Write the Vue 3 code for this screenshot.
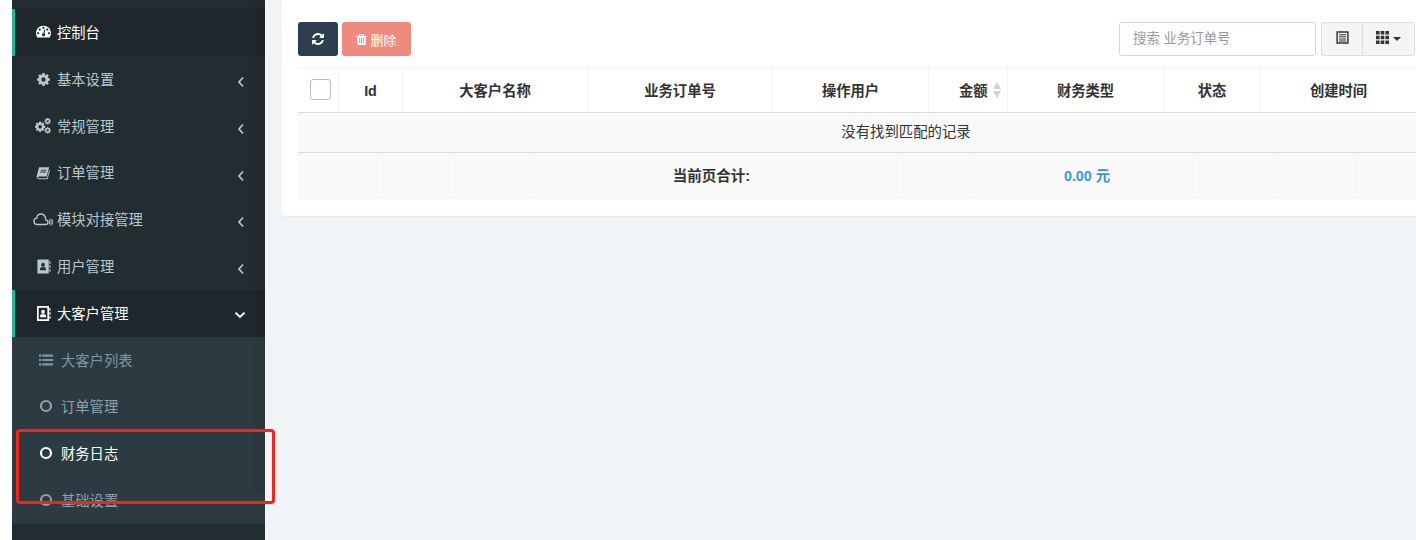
<script setup>
const cog = 'M1152 896q0-106-75-181t-181-75-181 75-75 181 75 181 181 75 181-75 75-181zm512-109v222q0 12-8 23t-20 13l-185 28q-19 54-39 91 35 50 107 138 10 12 10 25t-9 23q-27 37-99 108t-94 71q-12 0-26-9l-138-108q-44 23-91 38-16 136-29 186-7 28-36 28h-222q-14 0-24.5-8.5t-11.5-21.5l-28-184q-49-16-90-37l-141 107q-10 9-25 9-14 0-25-11-126-114-165-168-7-10-7-23 0-12 8-23 15-21 51-66.5t54-70.5q-27-50-41-99l-183-27q-13-2-21-12.5t-8-23.5v-222q0-12 8-23t19-13l186-28q14-46 39-92-40-57-107-138-10-12-10-24 0-10 9-23 26-36 98.5-107.5t94.5-71.5q13 0 26 10l138 107q44-23 91-38 16-136 29-186 7-28 36-28h222q14 0 24.5 8.5t11.5 21.5l28 184q49 16 90 37l142-107q9-9 24-9 13 0 25 10 129 119 165 170 7 8 7 22 0 12-8 23-15 21-51 66.5t-54 70.5q26 50 41 98l183 28q13 2 21 12.5t8 23.5z'
const vbFa = '0 0 1792 1792'
const icons = {
  dash: { vb: vbFa, paths: [{ d: 'M384 1152q0-53-37.5-90.5t-90.5-37.5-90.5 37.5-37.5 90.5 37.5 90.5 90.5 37.5 90.5-37.5 37.5-90.5zm192-448q0-53-37.5-90.5t-90.5-37.5-90.5 37.5-37.5 90.5 37.5 90.5 90.5 37.5 90.5-37.5 37.5-90.5zm428 481l101-382q6-26-7.5-48.5t-38.5-29.5-48 6.5-30 39.5l-101 382q-60 5-107 43.5t-63 98.5q-20 77 20 146t117 89 146-20 89-117q16-60-6-117t-72-91zm660-33q0-53-37.5-90.5t-90.5-37.5-90.5 37.5-37.5 90.5 37.5 90.5 90.5 37.5 90.5-37.5 37.5-90.5zm-640-640q0-53-37.5-90.5t-90.5-37.5-90.5 37.5-37.5 90.5 37.5 90.5 90.5 37.5 90.5-37.5 37.5-90.5zm448 192q0-53-37.5-90.5t-90.5-37.5-90.5 37.5-37.5 90.5 37.5 90.5 90.5 37.5 90.5-37.5 37.5-90.5zm320 448q0 261-141 483-19 29-54 29h-1402q-35 0-54-29-141-221-141-483 0-182 71-348t191-286 286-191 348-71 348 71 286 191 191 286 71 348z', t: 'translate(0 -180)' }] },
  cog: { vb: vbFa, paths: [{ d: cog }] },
  cogs: { vb: vbFa, paths: [
    { d: cog, t: 'translate(-110 300) scale(.76)' },
    { d: cog, t: 'translate(1000 -60) scale(.47)' },
    { d: cog, t: 'translate(1000 960) scale(.47)' }
  ] },
  book: { vb: '0 0 16 16', paths: [
    { d: 'M4.2 1.5h11l-.4 1.2-2.7 9.4H3.4c-.8 0-1.3.4-1.1 1 .2.5.6.8 1.2.8h9l2.6-9.3.9.7-2.8 9.7H3.4C1.9 14.8.8 13.8.7 12.4c0-.6.1-1 .3-1.5l2.2-8.2c.1-.6.5-1.2 1-1.2z' },
    { d: 'M5.6 4.2h6.6l-.2.9H5.4zM5 6.4h6.6l-.2.9H4.8z', fill: '#222d32' }
  ] },
  cloud: { vb: '0 0 20 14', paths: [
    { d: 'M4 12.5h8.6c1.4 0 2.4-1 2.4-2.3s-1-2.3-2.3-2.4C12.5 4.5 10.6 2 8 2 5.8 2 4 3.7 3.9 5.9 2.2 6.2 1 7.6 1 9.3c0 1.8 1.3 3.2 3 3.2z', fill: 'none', stroke: 'currentColor', sw: 1.3 },
    { d: 'M16 7.6h.9v5h-.9zM17.6 6.6h.9v7h-.9z M19 7.6h.8v5H19z' }
  ] },
  addr: { vb: '0 0 16 16', paths: [
    { d: 'M1.5 1.2c0-.4.3-.7.7-.7h11.4v15H2.2c-.4 0-.7-.3-.7-.7zM14.2 2.5h1.3v2.5h-1.3zM14.2 6.7h1.3v2.5h-1.3zM14.2 11h1.3v2.5h-1.3z' },
    { d: 'M7.5 4c1.1 0 1.9.9 1.9 2s-.8 2.2-1.9 2.2S5.6 7.1 5.6 6s.8-2 1.9-2zM4.2 12c0-1.8.8-3.2 2-3.4.4.3.8.5 1.3.5s.9-.2 1.3-.5c1.2.2 2 1.6 2 3.4z', fill: '#222d32' }
  ] },
  addro: { vb: '0 0 16 16', paths: [
    { d: 'M2 1h11v14H2z', fill: 'none', stroke: 'currentColor', sw: 1.8 },
    { d: 'M14.2 2.5h1.3v2.5h-1.3zM14.2 6.7h1.3v2.5h-1.3zM14.2 11h1.3v2.5h-1.3z' },
    { d: 'M7.5 4c1.1 0 1.9.9 1.9 2s-.8 2.2-1.9 2.2S5.6 7.1 5.6 6s.8-2 1.9-2zM4.2 12c0-1.8.8-3.2 2-3.4.4.3.8.5 1.3.5s.9-.2 1.3-.5c1.2.2 2 1.6 2 3.4z' }
  ] },
  list: { vb: '0 0 14 12', paths: [{ d: 'M0 .5h2.4v2.2H0zM3.4.5H14v2.2H3.4zM0 4.9h2.4v2.2H0zM3.4 4.9H14v2.2H3.4zM0 9.3h2.4v2.2H0zM3.4 9.3H14v2.2H3.4z' }] },
  circle: { vb: '0 0 14 14', paths: [{ d: 'M7 7m-5 0a5 5 0 1 0 10 0a5 5 0 1 0-10 0', fill: 'none', stroke: 'currentColor', sw: 2.2 }] },
  refresh: { vb: vbFa, paths: [{ d: 'M1639 1056q0 5-1 7-64 268-268 434.5t-478 166.5q-146 0-282.5-55t-243.5-157l-129 129q-19 19-45 19t-45-19-19-45v-448q0-26 19-45t45-19h448q26 0 45 19t19 45-19 45l-137 137q71 66 161 102t187 36q134 0 250-65t186-179q11-17 53-117 8-23 30-23h192q13 0 22.5 9.5t9.5 22.5zm25-800v448q0 26-19 45t-45 19h-448q-26 0-45-19t-19-45 19-45l138-138q-148-137-349-137-134 0-250 65t-186 179q-11 17-53 117-8 23-30 23h-199q-13 0-22.5-9.5t-9.5-22.5v-7q65-268 270-434.5t480-166.5q146 0 284 55.5t245 156.5l130-129q19-19 45-19t45 19 19 45z' }] },
  trash: { vb: vbFa, paths: [{ d: 'M704 1376v-704q0-14-9-23t-23-9h-64q-14 0-23 9t-9 23v704q0 14 9 23t23 9h64q14 0 23-9t9-23zm256 0v-704q0-14-9-23t-23-9h-64q-14 0-23 9t-9 23v704q0 14 9 23t23 9h64q14 0 23-9t9-23zm256 0v-704q0-14-9-23t-23-9h-64q-14 0-23 9t-9 23v704q0 14 9 23t23 9h64q14 0 23-9t9-23zm-544-992h448l-48-117q-7-9-17-11h-317q-10 2-17 11zm928 32v64q0 14-9 23t-23 9h-96v948q0 83-47 143.5t-113 60.5h-832q-66 0-113-58.5t-47-141.5v-952h-96q-14 0-23-9t-9-23v-64q0-14 9-23t23-9h309l70-167q15-37 54-63t79-26h320q40 0 79 26t54 63l70 167h309q14 0 23 9t9 23z' }] },
  tbl: { vb: '0 0 14 14', paths: [
    { d: 'M1.2 1h11.6v12H1.2z', fill: 'none', stroke: 'currentColor', sw: 1.6 },
    { d: 'M3.2 3.4h7.6v1.1H3.2zM3.2 5.7h7.6v1.1H3.2zM3.2 8h7.6v1.1H3.2zM3.2 10.2h7.6v1.1H3.2z' }
  ] },
  th: { vb: '0 0 13 13', paths: [{ d: 'M0 0h3.6v3.4H0zM4.7 0h3.6v3.4H4.7zM9.4 0H13v3.4H9.4zM0 4.8h3.6v3.4H0zM4.7 4.8h3.6v3.4H4.7zM9.4 4.8H13v3.4H9.4zM0 9.6h3.6V13H0zM4.7 9.6h3.6V13H4.7zM9.4 9.6H13V13H9.4z' }] }
}

const menu = [
  { label: '控制台', icon: 'dash', active: true },
  { label: '基本设置', icon: 'cog', arrow: true },
  { label: '常规管理', icon: 'cogs', arrow: true },
  { label: '订单管理', icon: 'book', arrow: true },
  { label: '模块对接管理', icon: 'cloud', arrow: true },
  { label: '用户管理', icon: 'addr', arrow: true },
  { label: '大客户管理', icon: 'addro', active: true, open: true }
]
const sub = [
  { label: '大客户列表', icon: 'list', dim: true },
  { label: '订单管理', icon: 'circle' },
  { label: '财务日志', icon: 'circle', on: true },
  { label: '基础设置', icon: 'circle' }
]
const heads = [
  { label: 'Id', w: 64, latin: true },
  { label: '大客户名称', w: 185 },
  { label: '业务订单号', w: 185 },
  { label: '操作用户', w: 156 },
  { label: '金额', w: 79, sort: true },
  { label: '财务类型', w: 156 },
  { label: '状态', w: 97 },
  { label: '创建时间', w: 156 },
  { label: '', w: 98 }
]
const foots = [
  { w: 79 }, { w: 79 }, { w: 78 },
  { w: 363, text: '当前页合计:', cls: 'sum' },
  { w: 78 },
  { w: 225, text: '0.00 元', cls: 'money' },
  { w: 78 }, { w: 79 }, { w: 157 }
]
const px = (w) => ({ width: w + 'px' })
</script>

<template>
  <div class="page">
    <aside class="side">
      <div class="side-top"></div>
      <div v-for="m in menu" :key="m.label" class="item" :class="{ active: m.active }">
        <span class="ico">
          <svg :viewBox="icons[m.icon].vb" class="svg" :class="'i-' + m.icon">
            <path v-for="(p, i) in icons[m.icon].paths" :key="i" :d="p.d" :transform="p.t" :fill="p.fill || 'currentColor'" :stroke="p.stroke" :stroke-width="p.sw" />
          </svg>
        </span>
        <span class="lbl">{{ m.label }}</span>
        <svg v-if="m.arrow" class="chev" viewBox="0 0 8 12"><path d="M6 1.5 2 6l4 4.5" fill="none" stroke="currentColor" stroke-width="1.7" /></svg>
        <svg v-if="m.open" class="chev open" viewBox="0 0 12 8"><path d="M1.5 1.8 6 6l4.5-4.2" fill="none" stroke="currentColor" stroke-width="2" /></svg>
      </div>
      <div class="submenu">
        <div v-for="s in sub" :key="s.label" class="subitem" :class="{ on: s.on }">
          <span class="subico">
            <svg :viewBox="icons[s.icon].vb" class="svg" :class="'i-' + s.icon">
              <path v-for="(p, i) in icons[s.icon].paths" :key="i" :d="p.d" :fill="p.fill || 'currentColor'" :stroke="p.stroke" :stroke-width="p.sw" />
            </svg>
          </span>
          <span class="lbl" :class="{ dimlbl: s.dim }">{{ s.label }}</span>
        </div>
      </div>
      <div class="scroll"></div>
    </aside>

    <main class="main">
      <section class="panel">
        <div class="toolbar">
          <div class="left">
            <button class="btn dark">
              <svg :viewBox="icons.refresh.vb" class="b-ico"><path :d="icons.refresh.paths[0].d" fill="currentColor" /></svg>
            </button>
            <button class="btn del">
              <svg :viewBox="icons.trash.vb" class="t-ico"><path :d="icons.trash.paths[0].d" fill="currentColor" /></svg>
              删除
            </button>
          </div>
          <div class="right">
            <div class="search">搜索 业务订单号</div>
            <div class="group">
              <button class="g-btn first">
                <svg :viewBox="icons.tbl.vb" class="g-ico">
                  <path v-for="(p, i) in icons.tbl.paths" :key="i" :d="p.d" :fill="p.fill || 'currentColor'" :stroke="p.stroke" :stroke-width="p.sw" />
                </svg>
              </button>
              <button class="g-btn second">
                <svg :viewBox="icons.th.vb" class="g-ico"><path :d="icons.th.paths[0].d" fill="currentColor" /></svg>
                <span class="caret"></span>
              </button>
            </div>
          </div>
        </div>

        <div class="table">
          <div class="thead">
            <div class="th chk"><span class="box"></span></div>
            <div v-for="h in heads" :key="h.label" class="th" :class="{ sortable: h.sort }" :style="px(h.w)">
              <span class="thl" :class="{ latin: h.latin }">{{ h.label }}</span>
              <span v-if="h.sort" class="sort"><i class="up"></i><i class="down"></i></span>
            </div>
          </div>
          <div class="empty">没有找到匹配的记录</div>
          <div class="tfoot">
            <div v-for="(f, i) in foots" :key="i" class="tf" :class="f.cls" :style="px(f.w)">{{ f.text }}</div>
          </div>
        </div>
      </section>
    </main>

    <div class="mark"></div>
  </div>
</template>

<style scoped>
.page {
  position: relative;
  display: flex;
  width: 1416px;
  height: 540px;
  overflow: hidden;
  background: #fff;
  font-family: "Liberation Sans", "Noto Sans CJK SC", sans-serif;
  font-size: 14.3px;
  padding-left: 12px;
  box-sizing: border-box;
}
.side {
  position: relative;
  width: 253px;
  flex: none;
  background: #222d32;
  color: #b8c7ce;
}
.side-top { height: 9.2px; }
.lbl { position: relative; top: -1px; }
.item {
  display: flex;
  align-items: center;
  height: 46.8px;
  padding-left: 18px;
  border-left: 3px solid transparent;
  box-sizing: border-box;
  position: relative;
}
.item.active {
  background: #1e282c;
  border-left-color: #18bc9c;
  color: #fff;
}
.ico {
  width: 20px;
  height: 16px;
  margin-right: 4px;
  display: flex;
  align-items: center;
  justify-content: center;
  flex: none;
}
.svg { width: 15px; height: 15px; display: block; flex: none; }
.i-cogs { width: 16px; height: 16px; }
.i-cloud { width: 20px; height: 14px; margin-top: -2px; }
.i-book { width: 14px; height: 14px; }
.chev {
  position: absolute;
  left: 222px;
  top: 20px;
  width: 8px;
  height: 12px;
}
.chev.open { left: 219px; top: 21px; width: 12px; height: 8px; }
.submenu { background: #2c3b41; color: #8aa4af; }
.subitem {
  display: flex;
  align-items: center;
  height: 46.8px;
  padding-left: 26px;
}
.subitem.on { color: #fff; }
.dimlbl { color: #7d98a3; }
.subico {
  width: 15px;
  height: 14px;
  margin-top: -1px;
  margin-right: 8px;
  display: flex;
  align-items: center;
  justify-content: center;
  flex: none;
}
.i-circle { width: 14px; height: 14px; }
.i-list { width: 14px; height: 12px; color: #7d98a3; }
.scroll {
  position: absolute;
  right: 0;
  top: 0;
  width: 10px;
  height: 494px;
  border-radius: 0 0 0 5px;
  background: rgba(0, 0, 0, 0.06);
}
.main {
  flex: 1;
  background: #f1f4f6;
  padding-left: 17px;
  min-width: 0;
}
.panel {
  background: #fff;
  padding: 22px 0 17px 16px;
  border-radius: 0 0 0 4px;
  box-shadow: 0 1px 1px rgba(0, 0, 0, 0.05);
}
.toolbar {
  display: flex;
  justify-content: space-between;
  height: 34px;
  margin-bottom: 11px;
}
.left, .right { display: flex; }
.left { gap: 4px; }
.btn {
  height: 34px;
  border: 0;
  border-radius: 3px;
  color: #fff;
  font: inherit;
  font-size: 13px;
  padding: 0;
  display: flex;
  align-items: center;
  justify-content: center;
}
.dark { width: 40px; background: #2c3e50; }
.del { width: 69px; background: #e74c3c; opacity: 0.65; gap: 2px; padding-right: 1px; box-sizing: border-box; }
.b-ico { width: 14px; height: 14px; }
.t-ico { width: 13px; height: 13px; }
.right { gap: 5px; }
.search {
  width: 197px;
  height: 34px;
  box-sizing: border-box;
  border: 1px solid #d2d6de;
  border-radius: 3px;
  padding-left: 13px;
  line-height: 31px;
  font-size: 13.4px;
  color: #999;
}
.group { display: flex; margin-right: 1px; }
.g-btn {
  height: 34px;
  background: #f4f4f4;
  border: 1px solid #ddd;
  padding: 0;
  color: #333;
  display: flex;
  align-items: center;
  justify-content: center;
  box-sizing: border-box;
}
.first { width: 41px; border-radius: 3px 0 0 3px; border-right: 0; }
.second { width: 53px; border-radius: 0 3px 3px 0; gap: 4px; }
.g-ico { width: 13px; height: 13px; margin-top: -3px; }
.caret {
  width: 0;
  height: 0;
  border-left: 4px solid transparent;
  border-right: 4px solid transparent;
  border-top: 4px solid #333;
}
.table { width: 1216px; color: #333; }
.thead {
  display: flex;
  height: 46px;
  border-top: 1px solid #f4f4f4;
  border-bottom: 1px solid #ddd;
  box-sizing: border-box;
}
.th {
  display: flex;
  align-items: center;
  justify-content: center;
  gap: 5px;
  font-weight: 700;
  border-left: 1px solid #f4f4f4;
  box-sizing: border-box;
  flex: none;
}
.thl { position: relative; top: -1px; }
.thl.latin { top: 1px; }
.sortable { justify-content: flex-start; padding-left: 30px; }
.chk { width: 40px; justify-content: flex-start; padding-left: 12px; border-left: 0; }
.box {
  width: 21px;
  height: 21px;
  border: 1px solid #bbb;
  border-radius: 3px;
  box-sizing: border-box;
  margin-top: -1px;
}
.sort { display: flex; flex-direction: column; gap: 2px; margin-top: -1px; }
.up, .down {
  width: 0;
  height: 0;
  border-left: 4.5px solid transparent;
  border-right: 4.5px solid transparent;
}
.up { border-bottom: 7px solid #d2d2d2; }
.down { border-top: 7px solid #d2d2d2; }
.empty {
  height: 40px;
  line-height: 38px;
  background: #f9f9f9;
  text-align: center;
  font-size: 14.4px;
  border-bottom: 1px solid #ddd;
  box-sizing: border-box;
}
.tfoot {
  display: flex;
  height: 46px;
  background: #f9f9f9;
  border-bottom: 1px solid #f4f4f4;
  box-sizing: border-box;
}
.tf {
  flex: none;
  box-sizing: border-box;
  border-right: 1px solid #f4f4f4;
  text-align: center;
  line-height: 46px;
}
.sum { font-weight: 700; padding-right: 7px; font-size: 14.5px; }
.money { font-weight: 700; color: #3498db; }
.mark {
  position: absolute;
  left: 16px;
  top: 429px;
  width: 259px;
  height: 75px;
  box-sizing: border-box;
  border: 3px solid #fb2116;
  border-radius: 4px;
}
</style>
